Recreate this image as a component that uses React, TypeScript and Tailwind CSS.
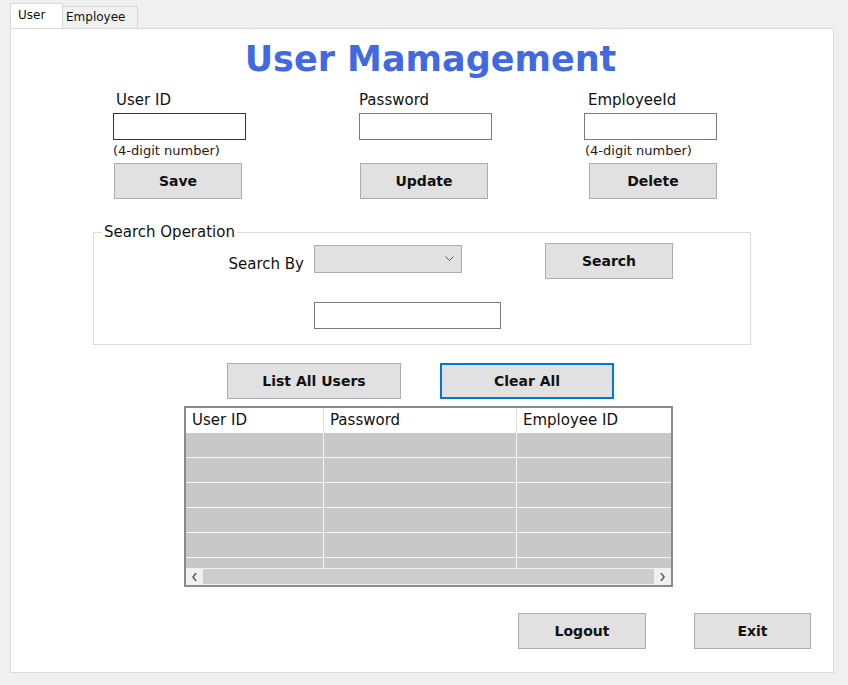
import React from "react";

const FONT = { fontFamily: '"DejaVu Sans", "Liberation Sans", sans-serif' };

function WinButton({
  label,
  className = "",
  focused = false,
}: {
  label: string;
  className?: string;
  focused?: boolean;
}) {
  return (
    <button
      className={`flex items-center justify-center bg-[#e1e1e1] text-[14px] font-bold text-[#111] ${
        focused ? "border-2 border-[#0078d7]" : "border border-[#adadad]"
      } ${className}`}
    >
      {label}
    </button>
  );
}

function Field({
  label,
  hint,
  button,
  labelIndent,
  hintIndent,
  buttonIndent,
  dark = false,
}: {
  label: string;
  hint?: string;
  button: string;
  labelIndent: string;
  hintIndent: string;
  buttonIndent: string;
  dark?: boolean;
}) {
  return (
    <div className="flex w-[133px] flex-col">
      <div className={`h-[18px] text-[15px] leading-[18px] text-[#111] ${labelIndent}`}>{label}</div>
      <input
        className={`mt-[4px] h-[27px] w-[133px] border bg-white ${dark ? "border-[#333]" : "border-[#7a7a7a]"}`}
      />
      <div className={`mt-[3px] h-[16px] text-[13px] leading-[16px] text-[#2a1616] ${hintIndent}`}>
        {hint ?? ""}
      </div>
      <WinButton label={button} className={`mt-[4px] h-[36px] w-[128px] ${buttonIndent}`} />
    </div>
  );
}

const ROWS = [0, 1, 2, 3, 4, 5];

export default function App() {
  return (
    <div className="h-[685px] w-[848px] bg-[#f0f0f0] pl-[10px] pt-[4px]" style={FONT}>
      {/* tabs */}
      <div className="flex h-[24px] items-end">
        <div className="relative z-10 flex h-[25px] w-[53px] items-start border border-b-0 border-[#d9d9d9] bg-white pl-[7px] pt-[4px] text-[12px] leading-[14px] text-[#111]">
          User
        </div>
        <div className="flex h-[22px] w-[75px] items-start border border-l-0 border-b-0 border-[#d9d9d9] bg-[#f0f0f0] pl-[3px] pt-[3px] text-[12px] leading-[14px] text-[#111]">
          Employee
        </div>
      </div>

      {/* panel */}
      <div className="flex h-[645px] w-[824px] flex-col border border-[#d9d9d9] bg-white">
        <div className="mt-[9px] h-[42px] pl-[17px] text-center text-[35px] font-bold leading-[42px] text-[#4169e1]">
          User Mamagement
        </div>

        <div className="mt-[11px] flex">
          <div className="ml-[102px]">
            <Field
              label="User ID"
              hint="(4-digit number)"
              button="Save"
              labelIndent="ml-[3px]"
              hintIndent=""
              buttonIndent="ml-[1px]"
              dark
            />
          </div>
          <div className="ml-[113px]">
            <Field label="Password" button="Update" labelIndent="" hintIndent="" buttonIndent="ml-[1px]" />
          </div>
          <div className="ml-[92px]">
            <Field
              label="EmployeeId"
              hint="(4-digit number)"
              button="Delete"
              labelIndent="ml-[4px]"
              hintIndent="ml-[1px]"
              buttonIndent="ml-[5px]"
            />
          </div>
        </div>

        {/* search group */}
        <fieldset className="ml-[82px] mt-[24px] h-[122px] w-[658px] border border-[#dcdcdc]">
          <legend className="ml-[8px] px-[2px] text-[15px] leading-[18px] text-[#111]">Search Operation</legend>
          <div className="flex items-start">
            <div className="ml-[133px] mt-[14px] w-[77px] text-right text-[15px] leading-[18px] text-[#111]">
              Search By
            </div>
            <div className="ml-[10px] mt-[4px] flex h-[28px] w-[148px] items-center justify-end border border-[#adadad] bg-[#e1e1e1] pr-[7px]">
              <svg width="9" height="6" viewBox="0 0 9 6" fill="none" stroke="#555" strokeWidth="1">
                <path d="M0.5 0.5 L4.5 4.5 L8.5 0.5" />
              </svg>
            </div>
            <WinButton label="Search" className="ml-[83px] mt-[2px] h-[36px] w-[128px]" />
          </div>
          <input className="ml-[220px] mt-[23px] block h-[27px] w-[187px] border border-[#7a7a7a] bg-white" />
        </fieldset>

        <div className="mt-[18px] flex">
          <WinButton label="List All Users" className="ml-[216px] h-[36px] w-[174px]" />
          <WinButton label="Clear All" className="ml-[39px] h-[36px] w-[174px]" focused />
        </div>

        {/* grid */}
        <div className="ml-[173px] mt-[7px] flex h-[181px] w-[489px] flex-col border-2 border-[#8a8a8a] bg-[#c8c8c8]">
          <div className="flex h-[25px] bg-white text-[15px] leading-[25px] text-[#111]">
            <div className="w-[138px] border-r border-[#e0e0e0] pl-[6px]">User ID</div>
            <div className="w-[193px] border-r border-[#e0e0e0] pl-[6px]">Password</div>
            <div className="flex-1 pl-[6px]">Employee ID</div>
          </div>
          <div className="h-[135px] overflow-hidden">
            {ROWS.map((r) => (
              <div key={r} className="flex h-[25px] border-b border-[#f4f4f4]">
                <div className="w-[138px] border-r border-[#f4f4f4]" />
                <div className="w-[193px] border-r border-[#f4f4f4]" />
                <div className="flex-1" />
              </div>
            ))}
          </div>
          <div className="flex h-[17px] items-center bg-[#f0f0f0]">
            <div className="flex w-[17px] justify-center">
              <svg width="7" height="8" viewBox="0 0 7 8" fill="#606060">
                <path d="M4 0 L6 0 L3 4 L6 8 L4 8 L1 4 Z" />
              </svg>
            </div>
            <div className="h-[15px] flex-1 bg-[#cdcdcd]" />
            <div className="flex w-[17px] justify-center">
              <svg width="7" height="8" viewBox="0 0 7 8" fill="#606060">
                <path d="M3 0 L1 0 L4 4 L1 8 L3 8 L6 4 Z" />
              </svg>
            </div>
          </div>
        </div>

        <div className="mt-[26px] flex">
          <WinButton label="Logout" className="ml-[507px] h-[36px] w-[128px]" />
          <WinButton label="Exit" className="ml-[48px] h-[36px] w-[117px]" />
        </div>
      </div>
    </div>
  );
}
